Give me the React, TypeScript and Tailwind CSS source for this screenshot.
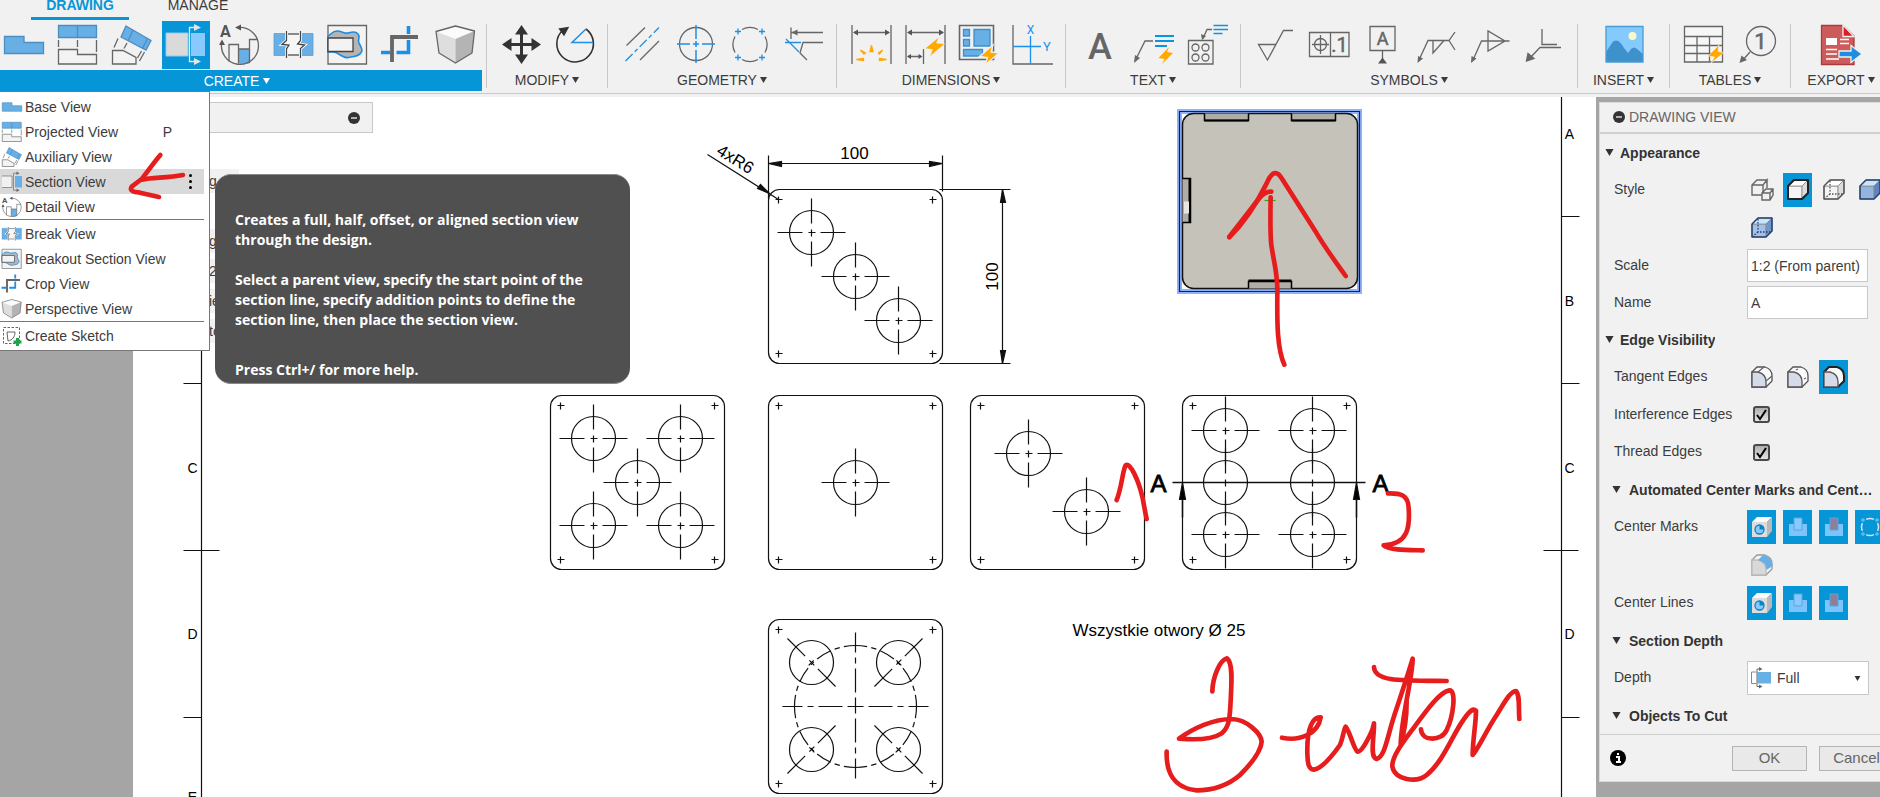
import { useState } from 'react'
import type { FC, ReactNode } from 'react'

interface IconProps {
  className?: string
}

const ARIAL = "font-['Liberation_Sans',Arial,sans-serif]"

const Svg: FC<{ className?: string; box?: string; children: ReactNode }> = ({
  className = 'w-10 h-10',
  box = '0 0 40 40',
  children,
}) => (
  <svg
    viewBox={box}
    className={`${className} shrink-0 overflow-visible`}
    fill="none"
    stroke="#666"
    strokeWidth="1.3"
    aria-hidden="true"
  >
    {children}
  </svg>
)

/* ---------- Create icons ---------- */

const BaseViewIcon: FC<IconProps> = ({ className }) => (
  <Svg className={className}>
    <path d="M.5 11.500h19.500v6h19.500v11H.5z" fill="#68afe5" stroke="#4c8ec0" />
  </Svg>
)

const ProjectedViewIcon: FC<IconProps> = ({ className }) => (
  <Svg className={className}>
    <path d="M.5.5h38v12H.5zM19.500.5v12" fill="#68afe5" stroke="#4c8ec0" />
    <path d="M.5 15v7M19.500 15v7M38.500 15v12" />
    <path d="M.5 24.500h19v5h19V39H.5z" fill="#f3f3f3" />
  </Svg>
)

const AuxiliaryViewIcon: FC<IconProps> = ({ className }) => (
  <Svg className={className}>
    <path d="M14 1l25 14.500-5 9.500L9 12z" fill="#68afe5" stroke="#4c8ec0" />
    <path d="M21 5l-5 11M35.500 13.500l-5 10" stroke="#4c8ec0" />
    <path d="M6 13.500l-4 9M15 18l-3 5.500M29.500 26l-4 7M32.500 27l-5 9" />
    <path d="M.5 25.500H11l13 7V39H.5z" fill="#f3f3f3" />
  </Svg>
)

const SectionViewActiveIcon: FC<IconProps> = ({ className }) => (
  <Svg className={className}>
    <path d="M0 8h22v23H0z" fill="#dadada" stroke="#8fc7ea" strokeWidth="1" />
    <path d="M25 8h14v23H25z" fill="#88caff" stroke="none" />
    <path d="M29 2.500h-5.500v34H29" stroke="#dceefa" />
    <path d="M28 -1l7 3.500-7 3.500zM28 33l7 3.500-7 3.500z" fill="#e4e4e4" stroke="none" />
  </Svg>
)

const SectionViewIcon: FC<IconProps> = ({ className }) => (
  <Svg className={className}>
    <path d="M0 8h20v23H0" fill="#f1f1f1" />
    <path d="M26 8h14v23H26z" fill="#68afe5" stroke="none" />
    <path d="M30 2.500h-7v34h7" />
    <path d="M29 -1l6 3.500-6 3.500zM29 33l6 3.500-6 3.500z" fill="#666" stroke="none" />
  </Svg>
)

const FullDepthIcon: FC<IconProps> = ({ className }) => (
  <Svg className={className}>
    <path d="M10 8H1v23h9" stroke="#888" strokeWidth="2" />
    <path d="M13 8h27v23H13z" fill="#68afe5" stroke="none" />
    <path d="M18 2h-6v35h6" strokeWidth="2" />
    <path d="M16 -2l7 4-7 4zM16 33l7 4-7 4z" fill="#666" stroke="none" />
  </Svg>
)

const DetailViewIcon: FC<IconProps> = ({ className }) => (
  <Svg className={className}>
    <path d="M18.500 24h11v14.500q-6 1.500-11 0z" fill="#68afe5" stroke="none" />
    <path d="M9 36.500v-17h9.500v19M18.500 24h11M29.500 38V14.500H38" />
    <path d="M18 2.500a18.500 18.500 0 1 1-16 14" />
    <path d="M21 -.5l-6 3 6 3zM-1 20l3-5.500 3 5.500z" fill="#555" stroke="none" />
    <text x="0" y="12" fontSize="16" fontWeight="700" fill="#555" stroke="none" className="font-['Roboto',sans-serif]">A</text>
  </Svg>
)

const BreakViewIcon: FC<IconProps> = ({ className }) => (
  <Svg className={className}>
    <path d="M0 8.500h12v22H0zM27 8.500h12v22H27z" fill="#68afe5" stroke="#5a9fd4" strokeWidth=".8" />
    <path d="M12.500 9h14v21h-14z" fill="#f6f6f6" stroke="none" />
    <path d="M14 9h11M14 30h11" />
    <path d="M12.500 6v9.500l-4.500 4 7 .500-2.500 4V33M26.500 6v9.500l-3 3.500 7 1-4 3.500V33" stroke="#fff" strokeWidth="3" />
    <path d="M12.500 6v9.500l-4.500 4 7 .500-2.500 4V33M26.500 6v9.500l-3 3.500 7 1-4 3.500V33" stroke="#444" />
  </Svg>
)

const BreakoutViewIcon: FC<IconProps> = ({ className }) => (
  <Svg className={className}>
    <path d="M0 .5h38.500V39H0z" fill="#f3f3f3" />
    <path d="M0 11c4-2 4-5 9-5s7 3 11 2 7-2 10 1-1 5 1 9 5 8 1 11-5 2-9 3-5 1-9-1-5-4-9-4H0z" fill="#b5b5b5" stroke="#1c8be0" strokeWidth="1.600" />
    <path d="M0 13h25v13.500H0z" fill="#f3f3f3" stroke="#444" />
  </Svg>
)

const CropViewIcon: FC<IconProps> = ({ className }) => (
  <Svg className={className}>
    <path d="M26.500 1v8M26.500 15v12.500H14.500M8 27.500H-1" stroke="#1c8fe8" strokeWidth="3.600" />
    <path d="M36 12H10v25" strokeWidth="3.800" stroke="#666" />
  </Svg>
)

const PerspectiveViewIcon: FC<IconProps> = ({ className }) => (
  <Svg className={className}>
    <path d="M0 6.500L19.500 1 38.500 6 19.500 14z" fill="#fbfbfb" stroke="none" />
    <path d="M0 6.500L19.500 14v24L3 28z" fill="#dedede" stroke="none" />
    <path d="M38.500 6L19.500 14v24L36 28z" fill="#b4b4b4" stroke="none" />
    <path d="M0 6.500L19.500 1l19 5L36 28l-16.500 10L3 28z" strokeLinejoin="round" />
  </Svg>
)

const CreateSketchIcon: FC<IconProps> = ({ className }) => (
  <Svg className={className}>
    <path d="M3 3h32v32H3z" stroke="#666" strokeWidth="2" strokeDasharray="5 3" />
    <path d="M10 12h16c0 10-5 16-14 18z" strokeWidth="2" />
    <path d="M31 24v16M23 32h16" stroke="#1fa34a" strokeWidth="6" />
  </Svg>
)

/* ---------- Other toolbar icons ---------- */

const MoveIcon = () => (
  <Svg>
    <path d="M21.500 6v27M8 19.500h27" stroke="#333" strokeWidth="3" />
    <path d="M21.500 0l6.500 9.500H15zM21.500 39l6.500-9.500H15zM2 19.500L11.500 13v13zM41 19.500L31.500 13v13z" fill="#333" stroke="none" />
  </Svg>
)

const RotateIcon = () => (
  <Svg>
    <path d="M9 5a18.300 18.300 0 1 0 23-1" stroke="#333" strokeWidth="1.600" />
    <path d="M5.500 4L14 2.500 10 10z" fill="#333" stroke="#333" />
    <path d="M32 4L18 17.500h21" stroke="#1c8fe8" strokeWidth="1.500" />
  </Svg>
)

const CenterlineIcon = () => (
  <Svg>
    <path d="M5.500 20.500L24 2.500M19 35l19-19" />
    <path d="M4.500 36L38 2.500" stroke="#1c8fe8" strokeDasharray="10 3 4 3" />
  </Svg>
)

const CenterMarkIcon = () => (
  <Svg>
    <circle cx="21" cy="19" r="16.500" />
    <path d="M21 0v14M21 25v13M2 19h13M27 19h13M18 19h6M21 16v6" stroke="#1c8fe8" strokeWidth="1.500" />
  </Svg>
)

const CenterPatternIcon = () => (
  <Svg>
    <path d="M13 4.500a17 17 0 0 1 16 0M36 11.500a17 17 0 0 1 0 16M13 34.500a17 17 0 0 0 16 0M6 11.500a17 17 0 0 0 0 16" />
    <path d="M9 3.500v6M6 6.500h6M33 3.500v6M30 6.500h6M9 29.500v6M6 32.500h6M33 29.500v6M30 32.500h6" stroke="#1c8fe8" />
  </Svg>
)

const EdgeExtensionIcon = () => (
  <Svg>
    <path d="M8 2.500V14M8 7.500h32M40 17.500H20L17 28l7 7" />
    <path d="M8.500 7.500l6-3v6z" fill="#666" stroke="none" />
    <path d="M2 17.500h16M3 14l13 13" stroke="#1c8fe8" />
  </Svg>
)

const DimensionArrow = () => (
  <>
    <path d="M2 0v39M41 0v39M4 7.500h35" />
    <path d="M3 7.500l5-3v6zM40 7.500l-5-3v6z" fill="#555" stroke="none" />
  </>
)

const DimensionIcon = () => (
  <Svg>
    <DimensionArrow />
    <path d="M20 26.500l1.500-6 1.500 6zM14 29l-3.500-4 5 3zM28.500 28l4-3-3 4zM6.500 34.500l7-1v2zM36.500 34.500l-7-1v2z" fill="#ffa800" stroke="#ffa800" />
  </Svg>
)

const AutoDimensionIcon = () => (
  <Svg>
    <DimensionArrow />
    <path d="M19.500 24v15M4 31.500h13" />
    <path d="M3 31.500l4-2.500v5zM18.500 31.500l-4-2.500v5z" fill="#555" stroke="none" />
    <path d="M35 12L21 23.500l7.500 1L26 31.500 40.500 19l-8-1z" fill="#ffa800" stroke="#f1f1f1" strokeWidth=".6" />
  </Svg>
)

const ArrangeIcon = () => (
  <Svg>
    <path d="M1.500.5h34v34h-34z" strokeWidth="1.600" />
    <path d="M5.500 4.500h6V11h-6zM5.500 14.500h6V21h-6zM16 4.500h16V21H16zM5.500 24.500h19v6.500h-19z" fill="#68afe5" stroke="#3f8fcd" />
    <path d="M35 20L21.500 31.500l8 1-2.500 7.500L41 28l-8-1z" fill="#ffa800" stroke="#f1f1f1" />
  </Svg>
)

const OrdinateIcon = () => (
  <Svg>
    <path d="M1 0v39h40" />
    <path d="M18.500 11v28M1 21.500h28" stroke="#1c8fe8" />
    <text x="18.500" y="8.500" textAnchor="middle" fontSize="12" fill="#1c8fe8" stroke="none" className="font-['Roboto',sans-serif]">X</text>
    <text x="35" y="26" textAnchor="middle" fontSize="13" fill="#1c8fe8" stroke="none" className="font-['Roboto',sans-serif]">Y</text>
  </Svg>
)

const TextIcon = () => (
  <Svg>
    <text x="21" y="34" textAnchor="middle" fontSize="36" fontWeight="500" fill="#666" stroke="none" className="font-['Roboto',sans-serif]">A</text>
  </Svg>
)

const LeaderIcon = () => (
  <Svg>
    <path d="M2 36l10-20h8" />
    <path d="M1 38l1-8 5 3z" fill="#666" stroke="none" />
    <path d="M22 11h19M22 16h19M22 21h12" stroke="#0b95dc" strokeWidth="2" />
    <path d="M36 22L25.500 33l6 1-2.500 5L40 28l-6-1z" fill="#ffa800" stroke="none" />
  </Svg>
)

const HoleNoteIcon = () => (
  <Svg>
    <path d="M1.500 15.500H26V39H1.500zM25 4.500h-5l-4 9" />
    <circle cx="8.500" cy="22.500" r="3.500" />
    <circle cx="18.500" cy="22.500" r="3.500" />
    <circle cx="8.500" cy="32.500" r="3.500" />
    <circle cx="18.500" cy="32.500" r="3.500" />
    <path d="M15 15l-1-6 5 2z" fill="#666" stroke="none" />
    <path d="M26.500.5H41M26.500 4.500H41M26.500 8.500h9" stroke="#0b95dc" />
  </Svg>
)

const SurfaceTextureIcon = () => (
  <Svg>
    <path d="M22 19.500H4.500L13.500 35l16-29.500H39" />
  </Svg>
)

const FeatureControlIcon = () => (
  <Svg>
    <path d="M1.500 7.500H41v24H1.500zM22.500 7.500v24M12.500 10v19M4 19.500h17" />
    <circle cx="12.500" cy="19.500" r="6" />
    <text x="31.500" y="27" textAnchor="middle" fontSize="20" fill="#666" stroke="#666" strokeWidth=".5" className="font-['Roboto',sans-serif]">.1</text>
  </Svg>
)

const DatumIcon = () => (
  <Svg>
    <path d="M8 1.500h25v24H8zM20.500 25.500V34" />
    <path d="M16 38.500l4.500-6 4.500 6z" fill="#555" stroke="none" />
    <text x="20.500" y="20" textAnchor="middle" fontSize="18" fill="#666" stroke="#666" strokeWidth=".5" className="font-['Roboto',sans-serif]">A</text>
  </Svg>
)

const WeldIcon = () => (
  <Svg>
    <path d="M3 35l9-19.500h21L39 7M33 15.500l6 9.500M17 15.500V28l11-12.500" />
    <path d="M1.500 38l.500-7 5 2.500z" fill="#666" stroke="none" />
  </Svg>
)

const TaperIcon = () => (
  <Svg>
    <path d="M3 35l8.500-19h28M18 6v20l17-10z" />
    <path d="M1 38l.500-7 5 2.500z" fill="#666" stroke="none" />
  </Svg>
)

const BendIcon = () => (
  <Svg>
    <path d="M5 34l11-11.500h21M18 4v15.500h15" />
    <path d="M2.500 36L4 28.500l6 5z" fill="#666" stroke="#666" />
  </Svg>
)

const ImageIcon = () => (
  <Svg>
    <path d="M2 1.500h37V37H2z" fill="#84caff" stroke="none" />
    <path d="M2 27l6-9c4-5 8-2 12 5l4 5 3-4c2-2 4-2 6 0l6 5v8H2z" fill="#3f91cc" stroke="none" />
    <path d="M2 1.500h37V37H2z" stroke="#4c9bd2" />
    <circle cx="28.500" cy="11" r="4" fill="#fcf8c4" stroke="none" />
  </Svg>
)

const TableIcon = () => (
  <Svg>
    <path d="M1.500 1.500h38V37h-38z" fill="#f6f6f6" />
    <path d="M1.500 11.500h38M1.500 20.500h38M1.500 28.500h38M14 11.500V37M26.500 11.500V37" />
    <path d="M36 20l-11 11 6.500 1-3.500 6L41 27.500l-6-1z" fill="#ffa800" stroke="#f1f1f1" strokeWidth=".6" />
  </Svg>
)

const BalloonIcon = () => (
  <Svg>
    <circle cx="24" cy="16" r="14.500" />
    <path d="M13 27l-8 9" />
    <path d="M2.500 38l2-7.500 5.500 4.500z" fill="#666" stroke="none" />
    <text x="23.500" y="24" textAnchor="middle" fontSize="22" fill="#666" stroke="#666" strokeWidth=".6" className="font-['Roboto',sans-serif]">1</text>
  </Svg>
)

const ExportIcon = () => (
  <Svg>
    <path d="M.5.5H22L33 11v28.500H.5z" fill="#ce5b5b" stroke="#a83c3c" />
    <path d="M22 0v11.500h11z" fill="#d42020" stroke="#f1f1f1" />
    <path d="M5 13h11v7H5z" fill="#fff" stroke="none" />
    <path d="M19 14.500h9M19 18.500h9M5 24.500h11M5 29h11M5 34h13" stroke="#fff" />
    <path d="M18 26h12v-5.500L41 29l-11 8.500V32H18z" fill="#1c8fe0" stroke="#f1f1f1" />
  </Svg>
)

const Caret: FC<IconProps> = ({ className = 'w-[7px] h-[6px]' }) => (
  <svg viewBox="0 0 7 6" className={className} fill="currentColor" aria-hidden="true">
    <path d="M0 0h7L3.500 6z" />
  </svg>
)

interface Group {
  label: string
  width: string
  tools: [string, FC<IconProps>][]
}

const createTools: [string, FC<IconProps>][] = [
  ['Base View', BaseViewIcon],
  ['Projected View', ProjectedViewIcon],
  ['Auxiliary View', AuxiliaryViewIcon],
  ['Section View', SectionViewActiveIcon],
  ['Detail View', DetailViewIcon],
  ['Break View', BreakViewIcon],
  ['Breakout Section View', BreakoutViewIcon],
  ['Crop View', CropViewIcon],
  ['Perspective View', PerspectiveViewIcon],
]

const groups: Group[] = [
  { label: 'MODIFY', width: '', tools: [['Move', MoveIcon], ['Rotate', RotateIcon]] },
  {
    label: 'GEOMETRY',
    width: '',
    tools: [
      ['Centerline', CenterlineIcon],
      ['Center Mark', CenterMarkIcon],
      ['Center Mark Pattern', CenterPatternIcon],
      ['Edge Extension', EdgeExtensionIcon],
    ],
  },
  {
    label: 'DIMENSIONS',
    width: '',
    tools: [
      ['Dimension', DimensionIcon],
      ['Auto Dimension', AutoDimensionIcon],
      ['Arrange Dimensions', ArrangeIcon],
      ['Ordinate Dimension', OrdinateIcon],
    ],
  },
  { label: 'TEXT', width: '', tools: [['Text', TextIcon], ['Leader', LeaderIcon], ['Hole Note', HoleNoteIcon]] },
  {
    label: 'SYMBOLS',
    width: '',
    tools: [
      ['Surface Texture', SurfaceTextureIcon],
      ['Feature Control Frame', FeatureControlIcon],
      ['Datum Identifier', DatumIcon],
      ['Welding', WeldIcon],
      ['Taper', TaperIcon],
      ['Bend', BendIcon],
    ],
  },
  { label: 'INSERT', width: 'min-w-[92px]', tools: [['Insert Image', ImageIcon]] },
  { label: 'TABLES', width: '', tools: [['Table', TableIcon], ['Balloon', BalloonIcon]] },
  { label: 'EXPORT', width: 'min-w-[101px]', tools: [['Export PDF', ExportIcon]] },
]

const Toolbar = () => (
  <header className="shrink-0 h-[97px] overflow-hidden bg-[#f1f1f1]">
    <nav className="flex gap-5 pl-[31px] text-sm">
      <button className="w-[98px] h-5 flex justify-center items-start border-b-[3px] border-[#0696d7] text-[#0696d7] font-bold leading-[10px]">
        DRAWING
      </button>
      <button className="w-[98px] h-5 flex justify-center items-start text-[#3c3c3c] leading-[10px]">MANAGE</button>
    </nav>
    <div className="flex h-[74px] border-b border-[#c8c8c8]">
      <section className="w-[482px] shrink-0 mr-1">
        <div className="flex items-center gap-[6px] h-[50px]">
          {createTools.map(([name, Icon]) => (
            <button
              key={name}
              aria-label={name}
              className={`w-12 h-12 flex items-center justify-center ${name === 'Section View' ? 'bg-[#0696d7]' : ''}`}
            >
              <Icon />
            </button>
          ))}
        </div>
        <button className="w-full h-[21px] flex items-center justify-center gap-1 bg-[#0696d7] text-white text-sm pr-2">
          CREATE <Caret />
        </button>
      </section>
      {groups.map((group) => (
        <section
          key={group.label}
          className={`shrink-0 mt-1 h-16 px-[13px] flex flex-col items-center border-l border-[#c8c8c8] ${group.width}`}
        >
          <div className="shrink-0 flex gap-[14px] h-[46px] pt-px">
            {group.tools.map(([name, Icon]) => (
              <button key={name} aria-label={name} className="w-10 h-10">
                <Icon />
              </button>
            ))}
          </div>
          <button className="h-5 shrink-0 flex items-center gap-[3px] text-sm text-[#3c3c3c] whitespace-nowrap">
            {group.label} <Caret />
          </button>
        </section>
      ))}
    </div>
  </header>
)

/* ---------- Create menu ---------- */

const menuSections: { name: string; Icon: FC<IconProps>; shortcut?: string }[][] = [
  [
    { name: 'Base View', Icon: BaseViewIcon },
    { name: 'Projected View', Icon: ProjectedViewIcon, shortcut: 'P' },
    { name: 'Auxiliary View', Icon: AuxiliaryViewIcon },
    { name: 'Section View', Icon: SectionViewIcon },
    { name: 'Detail View', Icon: DetailViewIcon },
  ],
  [
    { name: 'Break View', Icon: BreakViewIcon },
    { name: 'Breakout Section View', Icon: BreakoutViewIcon },
    { name: 'Crop View', Icon: CropViewIcon },
    { name: 'Perspective View', Icon: PerspectiveViewIcon },
  ],
  [{ name: 'Create Sketch', Icon: CreateSketchIcon }],
]

const CreateMenu = () => (
  <div className="absolute left-0 top-[91px] w-[210px] pt-[2px] pb-[2px] pr-[5px] bg-white border border-l-0 border-[#777] text-sm text-[#3c3c3c]">
    {menuSections.map((items, i) => (
      <div key={i} className={i > 0 ? 'border-t border-[#777] pt-px' : ''}>
        {items.map(({ name, Icon, shortcut }) => (
          <button
            key={name}
            className={`w-full h-[25px] flex items-center pl-[2px] text-left ${name === 'Section View' ? 'bg-[#d9d9d9]' : ''}`}
          >
            <Icon className="w-5 h-5" />
            <span className="flex-1 pl-[3px] whitespace-nowrap">{name}</span>
            {shortcut && <span className="pr-8">{shortcut}</span>}
            {name === 'Section View' && (
              <span className="flex flex-col gap-[3px] mr-3">
                <i className="w-[3px] h-[3px] rounded-full bg-black" />
                <i className="w-[3px] h-[3px] rounded-full bg-black" />
                <i className="w-[3px] h-[3px] rounded-full bg-black" />
              </span>
            )}
          </button>
        ))}
      </div>
    ))}
  </div>
)

const Tooltip = () => (
  <div
    role="tooltip"
    className="absolute left-[215px] top-[174px] w-[415px] h-[210px] pt-[35px] pl-5 rounded-2xl bg-[#505050] border-y border-[#8a8a8a] text-white font-bold text-sm leading-5 font-['Open_Sans','Noto_Sans',sans-serif]"
  >
    <p>
      Creates a full, half, offset, or aligned section view
      <br />
      through the design.
    </p>
    <p className="mt-5">
      Select a parent view, specify the start point of the
      <br />
      section line, specify addition points to define the
      <br />
      section line, then place the section view.
    </p>
    <p className="mt-[30px]">Press Ctrl+/ for more help.</p>
  </div>
)

/* ---------- Browser strip behind the menu ---------- */

const CollapseIcon = () => (
  <svg viewBox="0 0 12 12" className="w-3 h-3 shrink-0" aria-hidden="true">
    <circle cx="6" cy="6" r="6" fill="#333" />
    <path d="M3 6h6" stroke="#ddd" strokeWidth="1.500" />
  </svg>
)

const Browser = () => (
  <div className="absolute left-0 top-[5px] w-[373px] text-sm text-[#3c3c3c]">
    <div className="h-[31px] flex items-center justify-end pr-3 bg-[#f1f1f1] border border-[#c8c8c8]">
      <button aria-label="Collapse browser">
        <CollapseIcon />
      </button>
    </div>
    <div className="mt-9 flex flex-col gap-[6px]">
      {['g', '', 'gs', '2', 'ie', 'to'].map((tail, i) => (
        <div key={i} className={`w-[239px] h-6 pl-[209px] leading-6 ${tail ? 'bg-[#f1f1f1]' : ''}`}>
          {tail}
        </div>
      ))}
    </div>
  </div>
)

/* ---------- Sheet ---------- */

const PLATE = 174

const Plate: FC<{ x: number; y: number; holes: [number, number][]; radial?: boolean }> = ({
  x,
  y,
  holes,
  radial,
}) => (
  <g transform={`translate(${x} ${y})`}>
    <rect width={PLATE} height={PLATE} rx="11" strokeWidth="1.200" />
    {[[10, 10], [164, 10], [10, 164], [164, 164]].map(([cx, cy]) => (
      <path key={`${cx}-${cy}`} d={`M${cx - 3} ${cy}h7M${cx} ${cy - 3}v7`} />
    ))}
    {holes.map(([dx, dy]) => (
      <g
        key={`${dx},${dy}`}
        transform={`translate(${87 + dx} ${87 + dy})${radial ? ` rotate(${dx * dy > 0 ? 45 : -45})` : ''}`}
      >
        <circle r="22" strokeWidth="1.200" />
        <path d="M-3 0h7M0 -3v7M-34 0h25M9 0h25" />
        {!radial && <path d="M0 -34v25M0 9v25" />}
      </g>
    ))}
  </g>
)

const letters: [string, number, number][] = [
  ['C', 193, 473],
  ['D', 193, 639],
  ['E', 193, 802],
  ['A', 1570, 139],
  ['B', 1570, 306],
  ['C', 1570, 473],
  ['D', 1570, 639],
]

const Sheet = () => (
  <svg className="absolute inset-0 w-full h-full" aria-label="Drawing sheet">
    <g transform="translate(-133.500 -97.500)" fill="none" stroke="#111" strokeWidth="1.200">
      {/* frame and zone ticks */}
      <path d="M202 97v800M1562 97v800" />
      <path d="M184 384h18M184 551h36M184 718h18M1562 217h18M1562 384h18M1544 551h35M1562 718h18" />
      <g fill="#000" stroke="none" fontSize="14" textAnchor="middle">
        {letters.map(([t, x, y]) => (
          <text key={`${t}${x}`} x={x} y={y}>
            {t}
          </text>
        ))}
      </g>

      <Plate x={769} y={190} holes={[[-44, -44], [0, 0], [43, 44]]} />
      <Plate x={551} y={396} holes={[[-44, -44], [43, -44], [0, 0], [-44, 43], [43, 43]]} />
      <Plate x={769} y={396} holes={[[0, 0]]} />
      <Plate x={971} y={396} holes={[[-29, -29], [29, 29]]} />
      <Plate x={1183} y={396} holes={[[-44, -52], [43, -52], [-44, 0], [43, 0], [-44, 52], [43, 52]]} />
      <Plate x={769} y={620} holes={[[-44, -44], [43, -44], [-44, 43], [43, 43]]} radial />
      {/* bolt circle: the pattern repeats once per quadrant */}
      <circle cx="856" cy="707" r="61" pathLength="360" strokeDasharray="11 4 5 4 15 4 4 4 15 4 5 4 11 0" />
      <path d="M783 707h20M808 707h6M819 707h24M848 707h16M869 707h24M898 707h6M909 707h20M856 633v20M856 658v6M856 669v24M856 698v16M856 719v24M856 748v6M856 759v20" />

      {/* dimensions */}
      <path d="M769 156v44M943 156v36M769 164h174M940 190h71M940 364h71M1003 190v174M708 155l71 45" />
      <path
        d="M769 164l13-2v5zM943 164l-13-2v5zM1003 190l-2 13h5zM1003 364l-2-13h5zM770 194l-12-5 3-4z"
        fill="#111"
      />
      <g fill="#000" stroke="none" fontSize="17">
        <text x="855" y="159" textAnchor="middle">100</text>
        <text transform="translate(998 277) rotate(-90)" textAnchor="middle">100</text>
        <text transform="translate(716 154) rotate(32)">4xR6</text>
        <text x="1073" y="636">Wszystkie otwory Ø 25</text>
      </g>

      {/* section line */}
      <path d="M1173 483h193M1183 490v28M1357 490v28" strokeWidth="1.500" />
      <path d="M1183 483l3 17h-6zM1357 483l3 17h-6z" fill="#000" />
      <g fill="#000" stroke="#000" strokeWidth=".8" fontSize="24">
        <text x="1151" y="492">A</text>
        <text x="1373" y="492">A</text>
      </g>

      {/* shaded view, selected */}
      <path d="M1180 112h180v180h-180z" stroke="#8fb2fa" strokeWidth="5" />
      <path d="M1180 112h180v180h-180z" stroke="#10224f" />
      <rect x="1183" y="114" width="175" height="175" rx="11" fill="#c5c2b9" strokeWidth="1.500" />
      <path d="M1205 114v7h44v-7M1292 114v7h44v-7M1249 289v-7h43v7M1183 179h8v44h-8" fill="#b0ada6" stroke="#000" strokeWidth="1.500" />
      <path d="M1205 121h44M1292 121h44M1249 281h43M1190 179v44" stroke="#000" strokeWidth="2" />
      <path d="M1187 202v12" stroke="#e8e6e2" strokeWidth="5" />
      <path d="M1265 201h11" stroke="#17b317" />
    </g>
  </svg>
)

/* Pen annotations, drawn on a grid three times finer than the page */
const Ink = () => (
  <svg className="absolute inset-0 w-full h-full pointer-events-none" aria-hidden="true">
    <g fill="none" stroke="#e71d1d" strokeLinecap="round" strokeLinejoin="round" strokeWidth="14">
      <g transform="translate(0 85) scale(.33333)">
        <path d="M481 210C455 240 440 265 425 282L395 305C388 318 400 321 420 323L477 336" />
        <path d="M425 284C460 276 500 280 549 270" />
      </g>
      <g transform="translate(1100 90) scale(.33333)">
        <path d="M388 442C430 400 470 340 500 280C515 245 530 240 545 265L650 430C680 480 710 520 737 558" />
        <path d="M388 440C420 400 450 360 478 325C490 310 500 304 514 305" />
        <path d="M512 322C511 370 510 430 514 465C520 510 532 545 532 600C532 670 528 770 553 824" />
      </g>
      <g transform="translate(1080 380) scale(.33333)">
        <path d="M110 360C125 325 128 270 137 256C150 245 175 300 187 350C192 375 196 400 200 417" />
        <path d="M924 340C960 339 985 343 986 385C990 440 985 492 911 496C930 511 980 510 1028 511" />
        <path d="M397 934C398 890 420 840 441 835C458 848 455 900 453 940C450 1010 450 1040 425 1060C395 1080 345 1080 297 1076C340 1045 400 1017 455 1017C500 1018 543 1060 545 1085C542 1120 500 1165 480 1185C445 1215 400 1231 350 1231C280 1225 258 1175 260 1115" />
        <path d="M606 1073C660 1085 715 1060 722 1012C700 1010 680 1040 682 1120C683 1150 685 1168 702 1169C725 1165 755 1130 780 1095C792 1065 790 1050 797 1040C812 1060 822 1110 833 1115C845 1115 860 1085 870 1065C878 1050 880 1042 882 1030C883 1070 868 1132 890 1137C915 1130 920 1075 945 1000C965 940 985 880 998 836C998 890 965 1010 962 1092C972 1060 980 1010 980 965L968 1085" />
        <path d="M882 861C884 905 960 902 1100 903" />
        <path d="M1023 1048C1025 1085 1085 1085 1100 1050C1120 1010 1130 930 1108 931C1080 935 1040 990 1000 1045C970 1085 935 1130 937 1160C945 1200 1010 1210 1040 1185C1090 1145 1120 1060 1150 1020C1170 990 1180 985 1188 992C1188 1030 1178 1080 1178 1125C1195 1105 1220 1050 1250 1005C1275 965 1290 935 1308 933C1320 945 1315 975 1318 1017" />
      </g>
    </g>
  </svg>
)

/* ---------- Drawing View panel ---------- */

const boxFront = 'M1 7h14v13H1z'
const boxTop = 'M1 7l6-6h14l-6 6z'
const boxSide = 'M15 7l6-6v13l-6 6z'

const BoxIcon: FC<{ front?: string; top?: string; side?: string; line?: string; hidden?: boolean; bold?: boolean }> = ({
  front = '#f4f4f4',
  top = '#fff',
  side = '#dcdcdc',
  line = '#555',
  hidden,
  bold,
}) => (
  <Svg className="w-[22px] h-[22px]" box="0 0 22 22">
    <path d={boxFront} fill={front} stroke="#888" strokeWidth=".8" />
    <path d={boxTop} fill={top} stroke="#888" strokeWidth=".8" />
    <path d={boxSide} fill={side} stroke="#888" strokeWidth=".8" />
    <path d="M1 7l6-6h14v13l-6 6H1z" stroke={line} strokeWidth={bold ? 2 : 1.5} strokeLinejoin="round" />
    {hidden && <path d="M7 2v13h13M7 15l-5 4" stroke={line} strokeDasharray="1.500 1.500" />}
  </Svg>
)

const BoxesIcon = () => (
  <Svg className="w-[22px] h-[22px]" box="0 0 22 22">
    <path d="M1 6l5-5h10l-4 5v10H1zM1 6h11l4-5v8" fill="#f1f1f1" strokeWidth="1.400" />
    <path d="M11 14l4-4h7v6l-3 5h-8zM11 14h8l3-4M19 14v7" fill="#f1f1f1" strokeWidth="1.400" />
  </Svg>
)

const RoundedBoxIcon: FC<{ variant: 'full' | 'short' | 'off' | 'fillet' }> = ({ variant }) => {
  const fillet = variant === 'fillet'
  return (
    <Svg className="w-[22px] h-[22px]" box="0 0 22 22">
      <path
        d="M1 6l5-5h8q7 2 7 9v5l-6 6H1z"
        fill={fillet ? '#f4f4f4' : '#fafafa'}
        stroke={fillet ? '#999' : variant === 'off' ? '#222' : '#555'}
        strokeWidth={variant === 'off' ? 2 : 1.3}
      />
      <path d="M1 6h6q8 2 8 10v5H1z" fill={fillet ? '#d9d9d9' : '#d5dbea'} stroke={fillet ? '#bbb' : '#555'} />
      {fillet && <path d="M7 6l5-5q9 1 9.500 11l-6 4q0-8-8.500-10z" fill="#68afe5" stroke="none" />}
      {variant === 'full' && <path d="M7 6l6-5M15 15l6-5" />}
      {variant === 'short' && <path d="M9 4l2-1M17 13l2-1" />}
    </Svg>
  )
}

const HoleIcon = () => (
  <Svg className="w-[22px] h-[22px]" box="0 0 22 22">
    <path d="M1 6h15v15H1z" fill="#dcdcdc" stroke="none" />
    <path d="M1 6l5-5h15l-5 5z" fill="#fbfbfb" stroke="none" />
    <path d="M16 6l5-5v14l-5 6z" fill="#b9b9b9" stroke="none" />
    <circle cx="8.500" cy="13.500" r="4.500" fill="#88caff" stroke="#0683c9" />
    <path d="M8.500 13.500V9a4.500 4.500 0 0 1 4.500 4.500z" fill="#0683c9" stroke="none" />
  </Svg>
)

const BossIcon: FC<{ inner: string }> = ({ inner }) => (
  <Svg className="w-[22px] h-[22px]" box="0 0 22 22">
    <path d="M2 8h18v12H2z" fill="#7cc4fb" stroke="none" />
    <path d="M7 2h8v12H7z" fill={inner} stroke="#5aa5dc" strokeWidth="1" />
  </Svg>
)

const PatternIcon = () => (
  <Svg className="w-[22px] h-[22px]" box="0 0 22 22">
    <circle cx="11" cy="11" r="8.500" stroke="#d5e6f0" strokeWidth="1.500" pathLength="80" strokeDasharray="12 8" strokeDashoffset="6" />
    <path d="M4 2v4M2 4h4M18 2v4M16 4h4M4 16v4M2 18h4M18 16v4M16 18h4" stroke="#5ec0f5" />
  </Svg>
)

interface Choice {
  name: string
  icon: ReactNode
  on?: boolean
}

const Choices: FC<{ items: Choice[] }> = ({ items }) => (
  <div className="flex flex-wrap gap-x-[7px] w-[140px]">
    {items.map(({ name, icon, on }) => (
      <span key={name} className="h-[38px] flex items-center">
        <button
          aria-label={name}
          aria-pressed={!!on}
          className={`w-[29px] h-[34px] flex items-center justify-center ${on ? 'bg-[#0696d7]' : ''}`}
        >
          {icon}
        </button>
      </span>
    ))}
  </div>
)

const Heading: FC<{ nested?: boolean; children: string }> = ({ nested, children }) => (
  <h3
    className={`h-[37px] w-[274px] flex items-center font-bold text-[#333] ${nested ? 'pl-3 gap-2' : 'pl-[5px] gap-[6px]'}`}
  >
    <Caret className="w-[9px] h-[7px] shrink-0" />
    <span className="truncate">{children}</span>
  </h3>
)

const Field: FC<{ label: string; id?: string; height?: string; children: ReactNode }> = ({
  label,
  id,
  height = 'min-h-[37px]',
  children,
}) => (
  <div className={`flex pl-[14px] ${height}`}>
    <label htmlFor={id} className="w-[133px] h-[37px] leading-[37px] shrink-0 whitespace-nowrap">
      {label}
    </label>
    {children}
  </div>
)

const CheckBox: FC<{ id: string }> = ({ id }) => {
  const [checked, setChecked] = useState(true)
  return (
    <span className="relative w-[17px] h-[17px] ml-[6px] self-center">
      <input
        id={id}
        type="checkbox"
        checked={checked}
        onChange={(e) => setChecked(e.target.checked)}
        className="block appearance-none w-[17px] h-[17px] rounded-[3px] border-2 border-[#4a4a4a] bg-linear-to-b from-[#b0b0b0] to-[#e4e4e4]"
      />
      {checked && (
        <svg viewBox="0 0 17 17" className="absolute inset-0 pointer-events-none" fill="none" stroke="#000" strokeWidth="2">
          <path d="M4 9l3 4 6-9" />
        </svg>
      )}
    </span>
  )
}

const holeChoices: Choice[] = [
  { name: 'Holes', icon: <HoleIcon />, on: true },
  { name: 'Bosses', icon: <BossIcon inner="#88caff" />, on: true },
  { name: 'Pins', icon: <BossIcon inner="#8c7f9b" />, on: true },
]

const DrawingViewPanel = () => {
  const [name, setName] = useState('A')
  const [scale, setScale] = useState('1:2 (From parent)')

  return (
    <aside className="w-[284px] shrink-0 overflow-hidden bg-[#a5a5a5] pl-[3px] pt-[5px]">
      <div className="w-[330px] bg-[#f1f1f1] border border-[#dadada] text-sm text-[#3c3c3c]">
        <header className="h-[31px] flex items-center gap-1 pl-[13px] pb-px border-b-2 border-[#cfcfcf] text-[#666]">
          <CollapseIcon />
          DRAWING VIEW
        </header>

        <Heading>Appearance</Heading>
        <Field label="Style">
          <Choices
            items={[
              { name: 'From parent', icon: <BoxesIcon /> },
              { name: 'Visible edges', icon: <BoxIcon line="#222" bold />, on: true },
              { name: 'Visible and hidden edges', icon: <BoxIcon hidden /> },
              { name: 'Shaded', icon: <BoxIcon front="#94b4e0" top="#cde4f8" side="#5f84bb" line="#24406f" /> },
              { name: 'Shaded with hidden edges', icon: <BoxIcon front="#a2c0e8" top="#cde4f8" side="#7196cb" line="#24406f" hidden /> },
            ]}
          />
        </Field>
        <Field label="Scale" id="scale">
          <input
            id="scale"
            value={scale}
            onChange={(e) => setScale(e.target.value)}
            className="w-[121px] h-[33px] self-center px-[3px] bg-white border border-[#c8c8c8]"
          />
        </Field>
        <Field label="Name" id="name">
          <input
            id="name"
            value={name}
            onChange={(e) => setName(e.target.value)}
            className="w-[121px] h-[33px] self-center px-[3px] bg-white border border-[#c8c8c8]"
          />
        </Field>

        <Heading>Edge Visibility</Heading>
        <Field label="Tangent Edges">
          <Choices
            items={[
              { name: 'Full length', icon: <RoundedBoxIcon variant="full" /> },
              { name: 'Shortened', icon: <RoundedBoxIcon variant="short" /> },
              { name: 'Off', icon: <RoundedBoxIcon variant="off" />, on: true },
            ]}
          />
        </Field>
        <Field label="Interference Edges" id="interference">
          <CheckBox id="interference" />
        </Field>
        <Field label="Thread Edges" id="thread" height="h-[38px]">
          <CheckBox id="thread" />
        </Field>

        <Heading nested>Automated Center Marks and Center Lines</Heading>
        <Field label="Center Marks">
          <Choices
            items={[
              ...holeChoices,
              { name: 'Patterns', icon: <PatternIcon />, on: true },
              { name: 'Fillets', icon: <RoundedBoxIcon variant="fillet" /> },
            ]}
          />
        </Field>
        <Field label="Center Lines">
          <Choices items={holeChoices} />
        </Field>

        <Heading nested>Section Depth</Heading>
        <Field label="Depth" id="depth" height="h-[38px]">
          <span className="relative w-[122px] h-[34px] self-center">
            <select id="depth" className="appearance-none w-full h-full pl-[29px] bg-white border border-[#c8c8c8]">
              <option>Full</option>
              <option>Slice</option>
            </select>
            <span className="absolute left-1 top-[7px] pointer-events-none">
              <FullDepthIcon className="block w-5 h-5" />
            </span>
            <span className="absolute right-2 top-[15px] pointer-events-none text-[#333]">
              <Caret className="block w-[7px] h-[5px]" />
            </span>
          </span>
        </Field>
        <Heading nested>Objects To Cut</Heading>

        <footer className="h-[47px] flex items-center pl-[10px] border-t border-[#cfcfcf] text-[15px] text-[#666]">
          <svg viewBox="0 0 16 16" className="w-4 h-4" aria-label="Info">
            <circle cx="8" cy="8" r="8" fill="#000" />
            <path d="M6 7h3v5M6 12h5M7 4h2" stroke="#fff" strokeWidth="2" fill="none" />
          </svg>
          <button className="ml-[106px] w-[75px] h-[25px] bg-[#e9e9e9] border border-[#b4b4b4]">OK</button>
          <button className="ml-3 w-[75px] h-[25px] bg-[#e9e9e9] border border-[#b4b4b4]">Cancel</button>
        </footer>
      </div>
    </aside>
  )
}

export default function App() {
  return (
    <div className={`relative h-screen flex flex-col overflow-hidden bg-[#a5a5a5] ${ARIAL}`}>
      <Toolbar />
      <main className="relative flex-1 min-h-0 flex pl-[133px]">
        <div className="relative flex-1 min-w-0 overflow-hidden bg-white">
          <Sheet />
        </div>
        <DrawingViewPanel />
        <Browser />
      </main>
      <CreateMenu />
      <Tooltip />
      <Ink />
    </div>
  )
}
